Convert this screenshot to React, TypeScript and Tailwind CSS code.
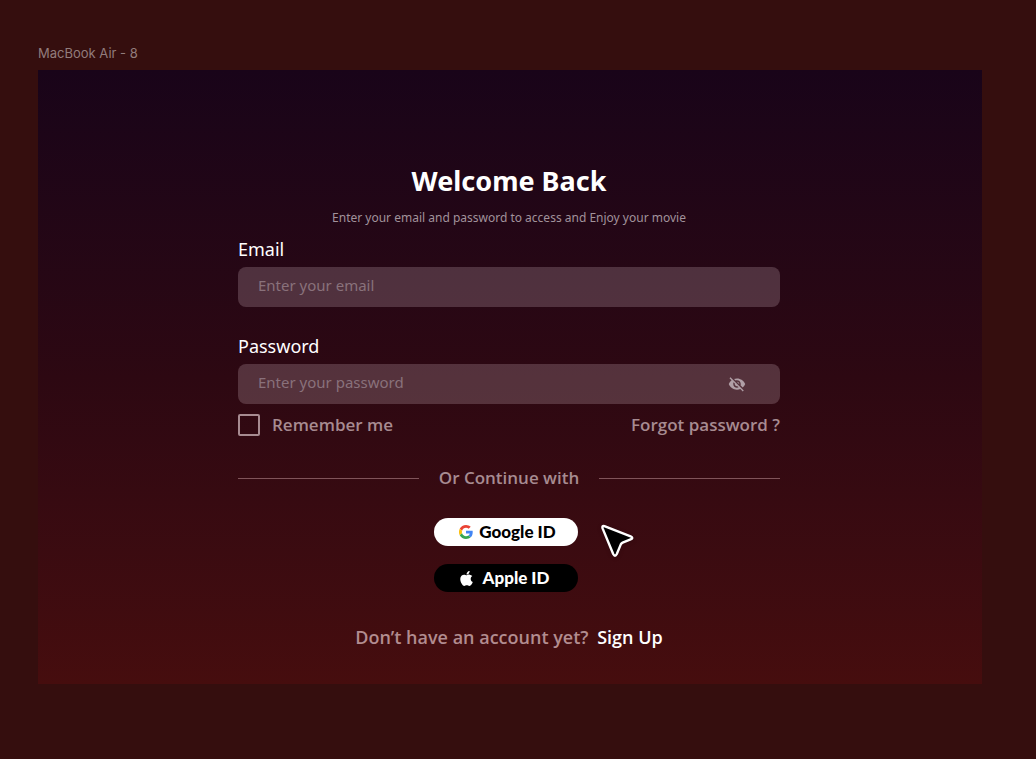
import { useState } from "react";
import type { ReactNode } from "react";
import { FaApple } from "react-icons/fa";
import { MdVisibilityOff } from "react-icons/md";

const fieldClass =
  "h-10 w-full rounded-lg bg-[#f5dce6]/20 pb-1 pl-5 pr-16 text-[15px] text-[#c9b0b8] outline-none placeholder:text-[#89717b]";

function Field({ id, label, children }: { id: string; label: string; children: ReactNode }) {
  return (
    <div className="flex flex-col gap-1">
      <label htmlFor={id} className="text-lg leading-7 text-white">
        {label}
      </label>
      {children}
    </div>
  );
}

function GoogleLogo() {
  return (
    <svg aria-hidden="true" viewBox="0 0 48 48" className="h-[14px] w-[14px]">
      <path
        fill="#EA4335"
        d="M24 9.5c3.54 0 6.71 1.22 9.21 3.6l6.85-6.85C35.9 2.38 30.47 0 24 0 14.62 0 6.51 5.38 2.56 13.22l7.98 6.19C12.43 13.72 17.74 9.5 24 9.5z"
      />
      <path
        fill="#4285F4"
        d="M46.98 24.55c0-1.57-.15-3.09-.38-4.55H24v9.02h12.94c-.58 2.96-2.26 5.48-4.78 7.18l7.73 6c4.51-4.18 7.09-10.36 7.09-17.65z"
      />
      <path
        fill="#FBBC05"
        d="M10.53 28.59c-.48-1.45-.76-2.99-.76-4.59s.27-3.14.76-4.59l-7.98-6.19C.92 16.46 0 20.12 0 24c0 3.88.92 7.54 2.56 10.78l7.97-6.19z"
      />
      <path
        fill="#34A853"
        d="M24 48c6.48 0 11.93-2.13 15.89-5.81l-7.73-6c-2.15 1.45-4.92 2.3-8.16 2.3-6.26 0-11.57-4.22-13.47-9.91l-7.98 6.19C6.51 42.62 14.62 48 24 48z"
      />
    </svg>
  );
}

function Cursor() {
  return (
    <svg
      aria-hidden="true"
      viewBox="0 0 36 38"
      className="pointer-events-none absolute left-full top-1 ml-5 h-[38px] w-9 drop-shadow-sm"
    >
      <path
        d="M6.4 4.2 32.6 14.4Q36 16 32.6 17.4L24.6 20.6Q23.4 21.2 22.8 22.4L18.8 32Q17 35.4 15.2 32L4.6 6.4Q3.8 3.4 6.4 4.2Z"
        fill="#000"
        stroke="#fff"
        strokeWidth="2.4"
        strokeLinejoin="round"
      />
    </svg>
  );
}

export default function App() {
  const [visible, setVisible] = useState(false);

  return (
    <main className="min-h-screen bg-[#350e0e] pb-[74px] pl-[38px] pr-[54px] pt-11 font-['Noto_Sans',sans-serif]">
      <p className="mb-2 font-['Inter',sans-serif] text-[13px] leading-[18px] text-[#927c7c]">MacBook Air - 8</p>

      <section className="bg-linear-to-b from-[#190419] via-[#2d0812] to-[#460d0e] pb-[35px] pl-5 pr-[22px] pt-[93px]">
        <form className="mx-auto flex max-w-[542px] flex-col" onSubmit={(e) => e.preventDefault()}>
          <h1 className="text-center text-[27px] font-bold leading-9 text-white">Welcome Back</h1>
          <p className="mt-[9px] text-center text-xs leading-5 text-[#a1929b]">
            Enter your email and password to access and Enjoy your movie
          </p>

          <div className="mt-[7px] flex flex-col gap-[25px]">
            <Field id="email" label="Email">
              <input id="email" type="email" placeholder="Enter your email" className={fieldClass} />
            </Field>
            <Field id="password" label="Password">
              <div className="relative">
                <input
                  id="password"
                  type={visible ? "text" : "password"}
                  placeholder="Enter your password"
                  className={fieldClass}
                />
                <button
                  type="button"
                  aria-label="Toggle password visibility"
                  onClick={() => setVisible(!visible)}
                  className="absolute inset-y-0 right-[34px] text-lg text-[#b09fa6]"
                >
                  <MdVisibilityOff />
                </button>
              </div>
            </Field>
          </div>

          <div className="mt-[9px] flex items-center justify-between font-['Open_Sans',sans-serif] text-[17px] font-semibold leading-6 text-[#a78b91]">
            <label className="flex items-center gap-3">
              <input
                type="checkbox"
                className="h-[22px] w-[22px] appearance-none rounded-xs border-2 border-[#a78b91] checked:bg-[#a78b91]"
              />
              Remember me
            </label>
            <a href="#forgot">Forgot password ?</a>
          </div>

          <div className="mt-[29px] flex items-center gap-5 font-['Open_Sans',sans-serif] text-[17px] font-semibold leading-6 text-[#a78b91]">
            <span className="h-px flex-1 bg-[#80545a]" />
            Or Continue with
            <span className="h-px flex-1 bg-[#80545a]" />
          </div>

          <div className="mr-[7px] flex justify-center">
            <div className="relative mt-7 flex w-36 flex-col gap-[18px] font-['Lato',sans-serif] text-[17px] font-black">
              <button
                type="button"
                className="flex h-7 items-center justify-center gap-[6px] rounded-full bg-white pl-1 text-black"
              >
                <GoogleLogo />
                Google ID
              </button>
              <button
                type="button"
                className="flex h-7 items-center justify-center gap-2 rounded-full bg-black pr-1 text-white"
              >
                <FaApple className="text-[17px]" />
                Apple ID
              </button>
              <Cursor />
            </div>
          </div>

          <p className="mt-[33px] text-center font-['Open_Sans',sans-serif] text-lg font-semibold leading-6 text-[#b28c90]">
            Don’t have an account yet?{" "}
            <a href="#signup" className="ml-1 text-white">
              Sign Up
            </a>
          </p>
        </form>
      </section>
    </main>
  );
}
